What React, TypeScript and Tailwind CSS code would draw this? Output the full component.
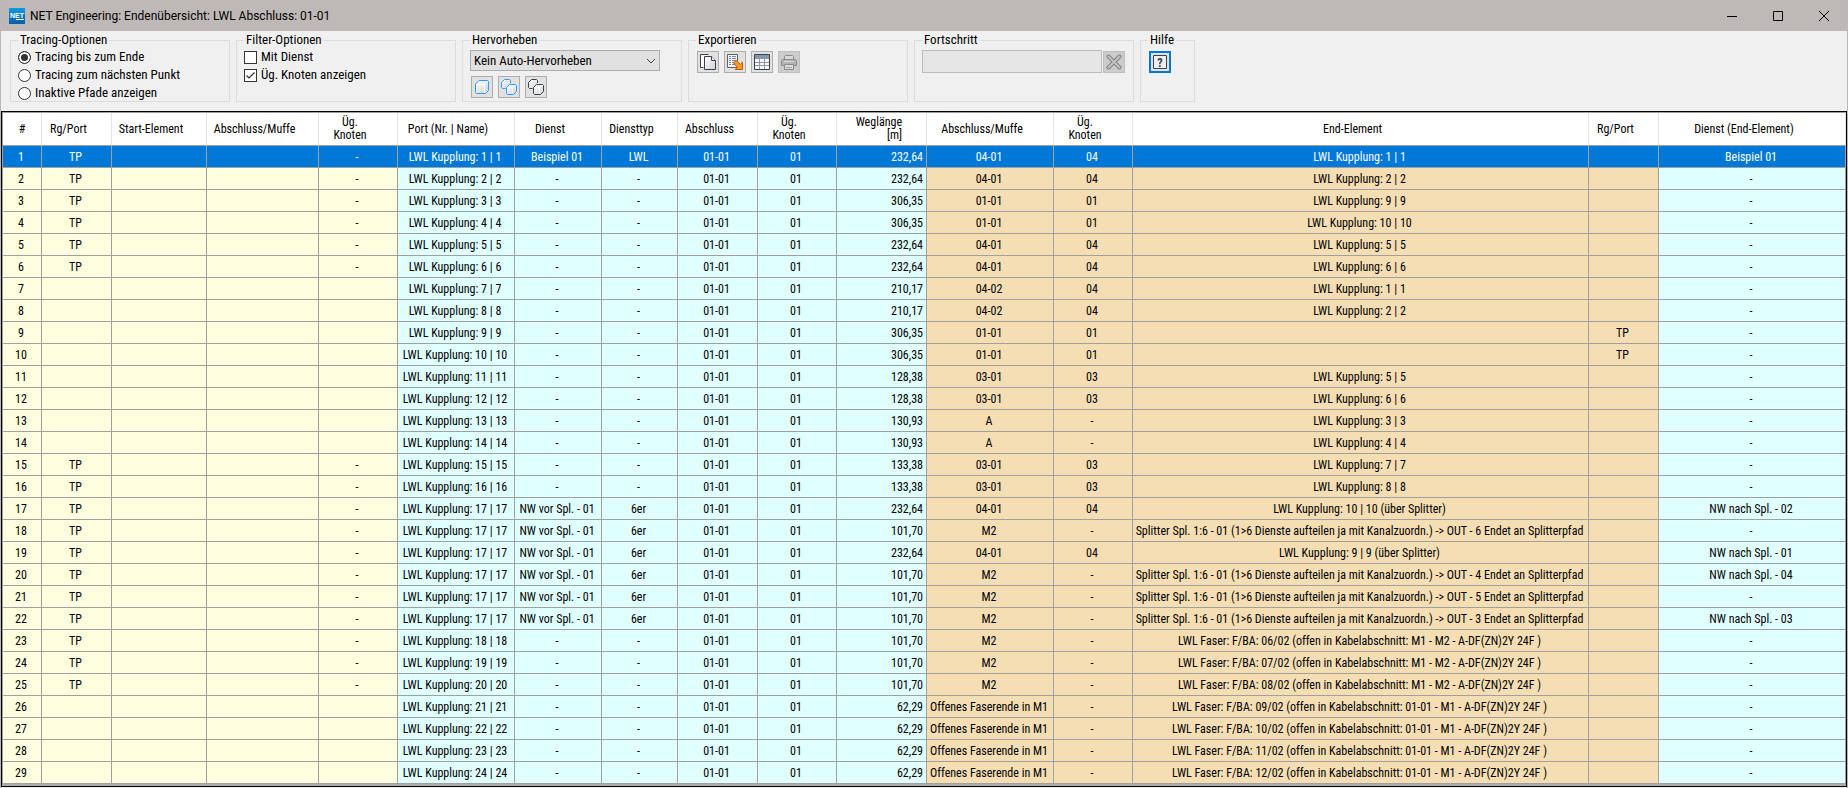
import { useState } from "react";
import type { ReactNode } from "react";
import { clsx } from "clsx";

type Tone = "start" | "trace" | "end";

type Column = {
  label: string;
  width: string;
  tone: Tone;
  align?: "right";
};

const COLUMNS: Column[] = [
  { label: "#", width: "w-[39px]", tone: "start" },
  { label: "Rg/Port", width: "w-[70px]", tone: "start" },
  { label: "Start-Element", width: "w-[95px]", tone: "start" },
  { label: "Abschluss/Muffe", width: "w-[112px]", tone: "start" },
  { label: "Üg.\nKnoten", width: "w-[79px]", tone: "start" },
  { label: "Port (Nr. | Name)", width: "w-[117px]", tone: "trace" },
  { label: "Dienst", width: "w-[87px]", tone: "trace" },
  { label: "Diensttyp", width: "w-[76px]", tone: "trace" },
  { label: "Abschluss", width: "w-[80px]", tone: "trace" },
  { label: "Üg.\nKnoten", width: "w-[79px]", tone: "trace" },
  { label: "Weglänge\n[m]", width: "w-[90px]", tone: "trace", align: "right" },
  { label: "Abschluss/Muffe", width: "w-[127px]", tone: "end" },
  { label: "Üg.\nKnoten", width: "w-[79px]", tone: "end" },
  { label: "End-Element", width: "", tone: "end" },
  { label: "Rg/Port", width: "w-[70px]", tone: "end" },
  { label: "Dienst (End-Element)", width: "w-[187px]", tone: "trace" },
];

const TONES: Record<Tone, string> = {
  start: "bg-[#ffffe0]",
  trace: "bg-[#e0ffff]",
  end: "bg-[#f5deb3]",
};

type Trace = {
  tp: boolean;
  port: number;
  dienst?: string;
  typ?: string;
  length: string;
  muffe: string;
  knoten: string;
  end: string;
  endPort?: string;
  endDienst?: string;
};

const kupplung = (n: number) => `LWL Kupplung: ${n} | ${n}`;
const splitter = (out: number) =>
  `Splitter Spl. 1:6 - 01 (1>6 Dienste aufteilen ja mit Kanalzuordn.) -> OUT - ${out} Endet an Splitterpfad`;
const faser = (ba: string, section: string) =>
  `LWL Faser: F/BA: ${ba}/02 (offen in Kabelabschnitt: ${section} - A-DF(ZN)2Y 24F )`;

const NW = { dienst: "NW vor Spl. - 01", typ: "6er" };
const OPEN_END = "Offenes Faserende in M1";

const TRACES: Trace[] = [
  { tp: true, port: 1, dienst: "Beispiel 01", typ: "LWL", length: "232,64", muffe: "04-01", knoten: "04", end: kupplung(1), endDienst: "Beispiel 01" },
  { tp: true, port: 2, length: "232,64", muffe: "04-01", knoten: "04", end: kupplung(2) },
  { tp: true, port: 3, length: "306,35", muffe: "01-01", knoten: "01", end: kupplung(9) },
  { tp: true, port: 4, length: "306,35", muffe: "01-01", knoten: "01", end: kupplung(10) },
  { tp: true, port: 5, length: "232,64", muffe: "04-01", knoten: "04", end: kupplung(5) },
  { tp: true, port: 6, length: "232,64", muffe: "04-01", knoten: "04", end: kupplung(6) },
  { tp: false, port: 7, length: "210,17", muffe: "04-02", knoten: "04", end: kupplung(1) },
  { tp: false, port: 8, length: "210,17", muffe: "04-02", knoten: "04", end: kupplung(2) },
  { tp: false, port: 9, length: "306,35", muffe: "01-01", knoten: "01", end: "", endPort: "TP" },
  { tp: false, port: 10, length: "306,35", muffe: "01-01", knoten: "01", end: "", endPort: "TP" },
  { tp: false, port: 11, length: "128,38", muffe: "03-01", knoten: "03", end: kupplung(5) },
  { tp: false, port: 12, length: "128,38", muffe: "03-01", knoten: "03", end: kupplung(6) },
  { tp: false, port: 13, length: "130,93", muffe: "A", knoten: "-", end: kupplung(3) },
  { tp: false, port: 14, length: "130,93", muffe: "A", knoten: "-", end: kupplung(4) },
  { tp: true, port: 15, length: "133,38", muffe: "03-01", knoten: "03", end: kupplung(7) },
  { tp: true, port: 16, length: "133,38", muffe: "03-01", knoten: "03", end: kupplung(8) },
  { tp: true, port: 17, ...NW, length: "232,64", muffe: "04-01", knoten: "04", end: `${kupplung(10)} (über Splitter)`, endDienst: "NW nach Spl. - 02" },
  { tp: true, port: 17, ...NW, length: "101,70", muffe: "M2", knoten: "-", end: splitter(6) },
  { tp: true, port: 17, ...NW, length: "232,64", muffe: "04-01", knoten: "04", end: `${kupplung(9)} (über Splitter)`, endDienst: "NW nach Spl. - 01" },
  { tp: true, port: 17, ...NW, length: "101,70", muffe: "M2", knoten: "-", end: splitter(4), endDienst: "NW nach Spl. - 04" },
  { tp: true, port: 17, ...NW, length: "101,70", muffe: "M2", knoten: "-", end: splitter(5) },
  { tp: true, port: 17, ...NW, length: "101,70", muffe: "M2", knoten: "-", end: splitter(3), endDienst: "NW nach Spl. - 03" },
  { tp: true, port: 18, length: "101,70", muffe: "M2", knoten: "-", end: faser("06", "M1 - M2") },
  { tp: true, port: 19, length: "101,70", muffe: "M2", knoten: "-", end: faser("07", "M1 - M2") },
  { tp: true, port: 20, length: "101,70", muffe: "M2", knoten: "-", end: faser("08", "M1 - M2") },
  { tp: false, port: 21, length: "62,29", muffe: OPEN_END, knoten: "-", end: faser("09", "01-01 - M1") },
  { tp: false, port: 22, length: "62,29", muffe: OPEN_END, knoten: "-", end: faser("10", "01-01 - M1") },
  { tp: false, port: 23, length: "62,29", muffe: OPEN_END, knoten: "-", end: faser("11", "01-01 - M1") },
  { tp: false, port: 24, length: "62,29", muffe: OPEN_END, knoten: "-", end: faser("12", "01-01 - M1") },
];

function toCells(t: Trace, index: number): string[] {
  return [
    String(index + 1),
    t.tp ? "TP" : "",
    "",
    "",
    t.tp ? "-" : "",
    kupplung(t.port),
    t.dienst ?? "-",
    t.typ ?? "-",
    "01-01",
    "01",
    t.length,
    t.muffe,
    t.knoten,
    t.end,
    t.endPort ?? "",
    t.endDienst ?? "-",
  ];
}

/* Toolbar icons, drawn on the 20px face of a tool button */

function Icon({ children }: { children: ReactNode }) {
  return (
    <svg viewBox="1 1 20 20" className="block h-5 w-5" fill="none" aria-hidden="true">
      <defs>
        <linearGradient id="face" x1="0" y1="0" x2="1" y2="1">
          <stop offset="0" stopColor="#ffffff" />
          <stop offset="1" stopColor="#cfd1d6" />
        </linearGradient>
      </defs>
      {children}
    </svg>
  );
}

function CubeIcon() {
  return (
    <Icon>
      <path d="M8 4.5H16.5L17.5 5.5V14.5L14.5 17.5H5.5L4.5 16.5V8Z" fill="url(#face)" stroke="#3399ff" />
      <path d="M5.5 8.5H13.5V16.5M13.5 8.5L16.5 5.5" stroke="#ffffff" />
    </Icon>
  );
}

function CubesIcon({ color }: { color: string }) {
  return (
    <Icon>
      <path d="M6.5 3.5H11.5L12.5 4.5V10L10 12.5H4.5L3.5 11.5V6.5Z" fill="url(#face)" />
      <path d="M7.5 12.5H4.5L3.5 11.5V6.5L6.5 3.5H11.5L12.5 4.5V7" stroke={color} />
      <path d="M11.5 8.5H17.5L18.5 9.5V15.5L15.5 18.5H9.5L8.5 17.5V11.5Z" fill="url(#face)" stroke={color} />
      <path d="M9.5 11.5H14.5V17.5M14.5 11.5L17.5 9.5" stroke="#ffffff" />
    </Icon>
  );
}

function CopyIcon() {
  return (
    <Icon>
      <path d="M3.5 3.5H11.5V5.5H7.5V16.5H3.5Z" fill="#fafafa" />
      <path d="M6.5 16.5H3.5V3.5H11.5" stroke="#3c4049" />
      <path d="M7.5 5.5H14.5L18.5 9.5V18.5H7.5Z" fill="url(#face)" stroke="#3c4049" />
      <path d="M14.5 5.5V9.5H18.5" fill="#ffffff" stroke="#3c4049" />
    </Icon>
  );
}

function ListExportIcon() {
  return (
    <Icon>
      <path d="M3.5 3.5H13.5V16.5H3.5Z" fill="#f4f5f8" stroke="#5a6070" />
      <path d="M5 5.5H7M8 5.5H12M5 7.5H7M8 7.5H12M5 9.5H7M8 9.5H12M5 11.5H7M8 11.5H11M5 13.5H7M8 13.5H12" stroke="#7c859c" />
      <path
        d="M12.5 9.5L16.3 13.3L18.5 11.2V18.5H11.2L13.3 16.3L10 13V11.5L12 9.5Z"
        fill="#ff9a1f"
        stroke="#b4600a"
      />
    </Icon>
  );
}

function TableIcon() {
  return (
    <Icon>
      <path d="M3.5 3.5H18.5V18.5H3.5Z" fill="#f7f8f9" />
      <path d="M4 4H18V7H4Z" fill="#8696ac" />
      <path d="M4 7.5H18M4 11.5H18M4 14.5H18M8.5 8V18M13.5 8V18" stroke="#9098a6" />
      <path d="M3.5 3.5H18.5V18.5H3.5Z" stroke="#3c4049" />
    </Icon>
  );
}

function PrinterIcon() {
  return (
    <Icon>
      <path d="M6.5 8V5.5L7.5 4.5H14.5L15.5 5.5V8" fill="#dadada" stroke="#8a8a8a" />
      <path d="M4.5 8.5H17.5L18.5 9.5V14.5H3.5V9.5Z" fill="#b4b4b4" stroke="#8a8a8a" />
      <path d="M6 10.5H16" stroke="#d8d8d8" />
      <path d="M6.5 13.5H15.5V18.5H6.5Z" fill="#dadada" stroke="#8a8a8a" />
      <path d="M8 16.5H14" stroke="#a8a8a8" />
    </Icon>
  );
}

function CancelIcon() {
  return (
    <Icon>
      <path d="M5.5 5.5L16.5 16.5M16.5 5.5L5.5 16.5" stroke="#808080" strokeWidth="4" strokeLinecap="round" />
      <path d="M5.5 5.5L16.5 16.5M16.5 5.5L5.5 16.5" stroke="#c3c3c3" strokeWidth="2" strokeLinecap="round" />
    </Icon>
  );
}

function HelpIcon() {
  return (
    <svg viewBox="2 2 18 18" className="block h-[18px] w-[18px]" aria-hidden="true">
      <path d="M4.5 4.5H17.5V17.5H4.5Z" fill="#eceef2" stroke="#3c4049" />
      <text x="11" y="15.5" textAnchor="middle" fontSize="12" fontWeight="bold" fill="#3c4049">
        ?
      </text>
    </svg>
  );
}

function Group({ title, narrow, children }: { title: string; narrow?: boolean; children: ReactNode }) {
  return (
    <fieldset
      className={clsx("h-[70px] shrink-0 border border-[#dcdcdc] px-[7px]", narrow ? "w-[55px]" : "w-[220px]")}
    >
      <legend className="px-[2px] leading-4">{title}</legend>
      {children}
    </fieldset>
  );
}

function ToolButton({
  label,
  disabled,
  focused,
  children,
}: {
  label: string;
  disabled?: boolean;
  focused?: boolean;
  children: ReactNode;
}) {
  return (
    <button
      type="button"
      aria-label={label}
      disabled={disabled}
      className={clsx(
        "h-[22px] w-[22px] shrink-0",
        focused && "border-2 border-[#0078d7] bg-[#e1e1e1]",
        disabled && "border border-[#bfbfbf] bg-[#cccccc]",
        !focused && !disabled && "border border-[#adadad] bg-[#e1e1e1]"
      )}
    >
      {children}
    </button>
  );
}

const MODES = ["Tracing bis zum Ende", "Tracing zum nächsten Punkt", "Inaktive Pfade anzeigen"];

function Toolbar() {
  const [mode, setMode] = useState(MODES[0]);
  const [mitDienst, setMitDienst] = useState(false);
  const [knoten, setKnoten] = useState(true);

  const filters = [
    { label: "Mit Dienst", checked: mitDienst, onChange: setMitDienst },
    { label: "Üg. Knoten anzeigen", checked: knoten, onChange: setKnoten },
  ];

  return (
    <div className="flex gap-[6px] px-[9px] pt-px pb-[9px] font-['Roboto_Condensed',Roboto,sans-serif] text-[13px]">
      <Group title="Tracing-Optionen">
        {MODES.map((m) => (
          <label key={m} className="flex h-[18px] items-center gap-1">
            <input
              type="radio"
              name="mode"
              checked={mode === m}
              onChange={() => setMode(m)}
              className="h-[13px] w-[13px] appearance-none rounded-full border border-[#333333] bg-white checked:bg-[#333333] checked:shadow-[inset_0_0_0_2px_white]"
            />
            {m}
          </label>
        ))}
      </Group>

      <Group title="Filter-Optionen">
        {filters.map(({ label, checked, onChange }) => (
          <label key={label} className="flex h-[18px] items-center gap-1">
            <span className="relative flex">
              <input
                type="checkbox"
                checked={checked}
                onChange={(e) => onChange(e.target.checked)}
                className="h-[13px] w-[13px] appearance-none border border-[#333333] bg-white"
              />
              {checked && (
                <svg viewBox="0 0 13 13" className="pointer-events-none absolute inset-0" fill="none">
                  <path d="M2.5 6.5L5 9L10.5 3.5" stroke="#333333" strokeWidth="1.2" />
                </svg>
              )}
            </span>
            {label}
          </label>
        ))}
      </Group>

      <Group title="Hervorheben">
        <div className="relative mt-[2px] w-[190px]">
          <select
            aria-label="Hervorheben"
            className="block h-[21px] w-full appearance-none border border-[#adadad] bg-[#e1e1e1] pl-[3px]"
          >
            <option>Kein Auto-Hervorheben</option>
          </select>
          <svg viewBox="0 0 10 6" className="pointer-events-none absolute top-[8px] right-[4px] h-[6px] w-[10px]" fill="none">
            <path d="M1 1L5 5L9 1" stroke="#444444" />
          </svg>
        </div>
        <div className="mt-[5px] flex gap-[5px] pl-px">
          <ToolButton label="Pfad hervorheben">
            <CubeIcon />
          </ToolButton>
          <ToolButton label="Alle Pfade hervorheben">
            <CubesIcon color="#3399ff" />
          </ToolButton>
          <ToolButton label="Hervorhebung aufheben">
            <CubesIcon color="#3c4049" />
          </ToolButton>
        </div>
      </Group>

      <Group title="Exportieren">
        <div className="mt-[3px] flex gap-[5px] pl-px">
          <ToolButton label="Kopieren">
            <CopyIcon />
          </ToolButton>
          <ToolButton label="Liste exportieren">
            <ListExportIcon />
          </ToolButton>
          <ToolButton label="Tabelle exportieren">
            <TableIcon />
          </ToolButton>
          <ToolButton label="Drucken" disabled>
            <PrinterIcon />
          </ToolButton>
        </div>
      </Group>

      <Group title="Fortschritt">
        <div className="mt-[2px] flex items-end gap-px">
          <progress
            aria-label="Fortschritt"
            value={0}
            max={100}
            className="h-[23px] w-[180px] appearance-none border border-[#bcbcbc] [&::-webkit-progress-bar]:bg-[#e6e6e6]"
          />
          <ToolButton label="Abbrechen" disabled>
            <CancelIcon />
          </ToolButton>
        </div>
      </Group>

      <Group title="Hilfe" narrow>
        <div className="mt-[3px] flex pl-px">
          <ToolButton label="Hilfe" focused>
            <HelpIcon />
          </ToolButton>
        </div>
      </Group>
    </div>
  );
}

function TitleBar() {
  return (
    <header className="flex h-[31px] items-center bg-[#beb9b7] pl-2">
      <span className="relative flex h-4 w-4 justify-center bg-linear-to-b from-[#109ade] to-[#0b5ea8] font-['Liberation_Sans',sans-serif] text-[7px] leading-[15px] font-bold text-white">
        NET
        <span className="absolute right-px bottom-[4px] h-px w-2 bg-white" />
      </span>
      <h1 className="flex-1 pl-[5px] font-[Roboto,sans-serif] text-[12px]">
        NET Engineering: Endenübersicht: LWL Abschluss: 01-01
      </h1>
      <button type="button" aria-label="Minimieren" className="flex h-full w-[46px] items-center justify-center">
        <svg viewBox="0 0 10 10" className="h-[10px] w-[10px]" fill="none">
          <path d="M0 5.5H10" stroke="black" />
        </svg>
      </button>
      <button type="button" aria-label="Maximieren" className="flex h-full w-[46px] items-center justify-center">
        <svg viewBox="0 0 10 10" className="h-[10px] w-[10px]" fill="none">
          <path d="M0.5 0.5H9.5V9.5H0.5Z" stroke="black" />
        </svg>
      </button>
      <button type="button" aria-label="Schließen" className="flex h-full w-[46px] items-center justify-center">
        <svg viewBox="0 0 10 10" className="h-[10px] w-[10px]" fill="none">
          <path d="M0 0L10 10M10 0L0 10" stroke="black" />
        </svg>
      </button>
    </header>
  );
}

function TraceTable() {
  const [selected, setSelected] = useState(0);

  return (
    <div className="border border-black bg-[#ababab] pb-[2px]">
      <table className="w-full table-fixed border-separate border-spacing-0 border-t border-l border-[#a0a0a0] font-['Roboto_Condensed',Roboto,sans-serif] text-[12px]">
        <colgroup>
          {COLUMNS.map((c, i) => (
            <col key={i} className={c.width} />
          ))}
        </colgroup>
        <thead>
          <tr className="h-[33px] bg-white">
            {COLUMNS.map((c, i) => (
              <th
                key={i}
                scope="col"
                className={clsx(
                  "border-r border-b border-r-[#e5e5e5] border-b-[#a0a0a0] p-0 leading-[13px] font-normal whitespace-pre",
                  c.align === "right" ? "pr-6 text-right" : i > 0 && "pr-4"
                )}
              >
                {c.label}
              </th>
            ))}
          </tr>
        </thead>
        <tbody>
          {TRACES.map((t, row) => (
            <tr key={row} onClick={() => setSelected(row)} className="h-[22px]">
              {toCells(t, row).map((text, i) => (
                <td
                  key={i}
                  className={clsx(
                    "border-r border-b border-[#a0a0a0] p-0 leading-4 whitespace-nowrap",
                    row === selected ? "bg-[#0078d7] text-white" : TONES[COLUMNS[i].tone],
                    COLUMNS[i].align === "right" ? "pr-[3px] text-right" : "pr-[2px] text-center"
                  )}
                >
                  {text}
                </td>
              ))}
            </tr>
          ))}
        </tbody>
      </table>
    </div>
  );
}

export default function App() {
  return (
    <div className="min-h-screen border-x border-[#b8b8b8] bg-[#f0f0f0] text-black">
      <TitleBar />
      <main>
        <Toolbar />
        <TraceTable />
      </main>
    </div>
  );
}
